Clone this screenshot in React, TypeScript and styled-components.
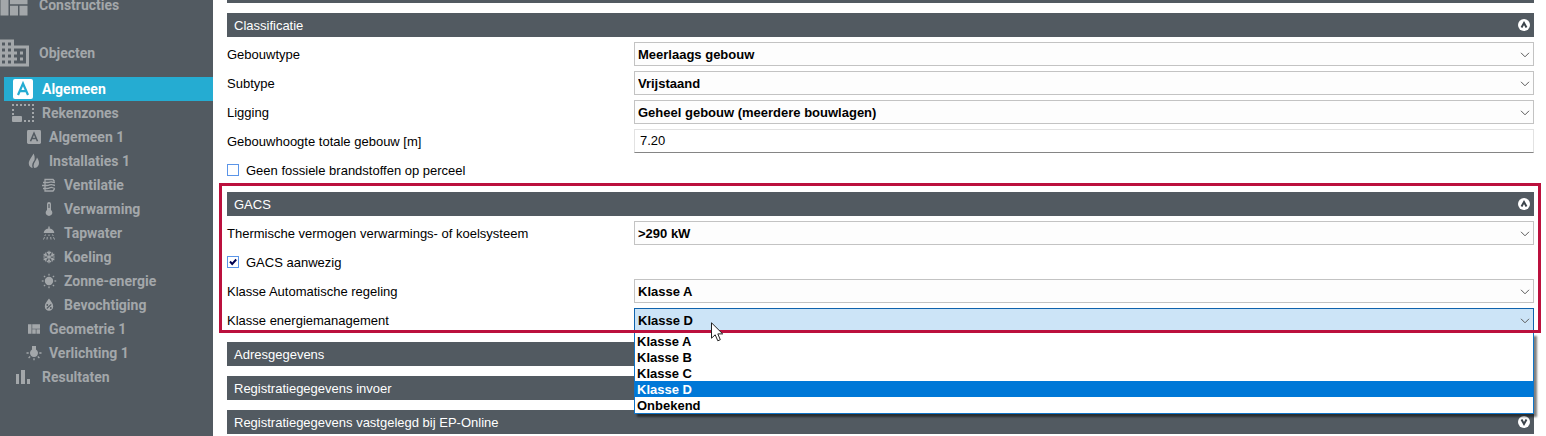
import React, { useState } from 'react';
import styled, { createGlobalStyle, css } from 'styled-components';
import { MdBusiness, MdViewQuilt } from 'react-icons/md';

const slate = '#525a61';
const muted = '#a3a7aa';
const cyan = '#25acd2';
const crimson = '#bb103d';

const GlobalStyle = createGlobalStyle`
  *, *::before, *::after { box-sizing: border-box; }
  body {
    margin: 0;
    background: #fff;
    color: #000;
    font-family: 'Liberation Sans', Arial, sans-serif;
    font-size: 13px;
    overflow: hidden;
  }
`;

const Page = styled.div`
  display: flex;
  height: 100vh;
  overflow: hidden;
`;

/* ---------- sidebar ---------- */

const Sidebar = styled.nav`
  flex: 0 0 213px;
  overflow: hidden;
  background: ${slate};
  font-family: Roboto, 'Liberation Sans', sans-serif;
  font-size: 14px;
  font-weight: bold;
  line-height: 16px;
`;

const NavList = styled.ul`
  list-style: none;
  margin: 0;
  padding: 0;
`;

const MainNav = styled(NavList)`
  margin: -19px 0 0 -4px;
`;

const TreeNav = styled(NavList)`
  margin-left: 4px;
`;

const MainLink = styled.a`
  display: flex;
  align-items: center;
  gap: 7px;
  height: 48px;
  color: ${muted};
  text-decoration: none;
`;

const TreeLink = styled.a<{ $level: number; $active?: boolean }>`
  display: flex;
  align-items: center;
  gap: 7px;
  height: 24px;
  padding-left: ${p => [7, 22, 37][p.$level]}px;
  color: ${p => (p.$active ? '#fff' : muted)};
  background: ${p => (p.$active ? cyan : 'transparent')};
  text-decoration: none;
`;

const IconSlot = styled.span<{ $wide: boolean }>`
  display: flex;
  align-items: center;
  justify-content: center;
  width: ${p => (p.$wide ? 24 : 16)}px;
  height: 24px;
`;

const LetterIcon = ({ size, ink }: { size: number; ink: string }) => (
  <svg width={size} height={size} viewBox="0 0 20 20">
    <rect width="20" height="20" rx="2" fill="currentColor" />
    <path d="M5 16 L10 4.500 L15 16 M6.800 12.200 H13.200" fill="none" stroke={ink} strokeWidth="2.200" />
  </svg>
);

const ZonesIcon = () => (
  <svg width="24" height="24" viewBox="0 0 24 24" fill="none" stroke="currentColor" strokeWidth="2">
    <path d="M1 4 H23 M2 8 V14 M22 7 V21 M13 20 H21" strokeDasharray="2 2" />
    <rect x="1" y="15" width="10" height="6" rx="1" fill="currentColor" stroke="none" />
  </svg>
);

const FlameIcon = () => (
  <svg width="16" height="16" viewBox="0 0 16 16" fill="currentColor">
    <path d="M7.500 0.500 C6 4 2.800 7 2.800 10.500 C2.800 13 4.500 14.800 6.600 15 C5.600 12 6.500 9.500 8.500 7 C9 4.500 8.500 2.200 7.500 0.500 Z" />
    <path d="M11 4.500 C10.500 7.500 7.600 9.500 7.600 12.500 C7.600 14 8 15 8.600 15 C11.500 14.700 13 12.600 13 10 C13 8 12 6 11 4.500 Z" />
  </svg>
);

const VentilationIcon = () => (
  <svg width="16" height="16" viewBox="0 0 16 16" fill="none" stroke="currentColor" strokeWidth="1.300">
    <path d="M13.500 4.500 L12 2.500 H4 V14 H12 L13.500 12" />
    <path d="M2 5.500 H7 C9 5.500 9 4.500 11 5 L14 5.500 M1 8.500 H6 C8.500 8.500 9 7 11 7.700 L14 8.500 M2 11.500 H6 C8.500 11.500 9 10 11 10.500 L14 11.500" />
  </svg>
);

const ThermometerIcon = () => (
  <svg width="16" height="16" viewBox="0 0 16 16">
    <path d="M6 3 a2 2 0 0 1 4 0 V9 a3.300 3.300 0 1 1 -4 0 Z" fill="currentColor" />
    <path d="M8 3 V7" stroke={slate} strokeWidth="1.200" />
  </svg>
);

const ShowerIcon = () => (
  <svg width="16" height="16" viewBox="0 0 16 16" fill="currentColor">
    <path d="M7.300 1.500 h1.400 v2 C11.500 3.800 13 5.500 13.300 8 H2.700 C3 5.500 4.500 3.800 7.300 3.500 Z" />
    <path
      d="M4.500 9.500 L3.800 11 M8 9.500 V11 M11.500 9.500 L12.200 11 M3.500 12.200 L2.500 14.500 M6.300 12 L6 14.500 M9.700 12 L10 14.500 M12.500 12.200 L13.500 14.500"
      stroke="currentColor"
    />
  </svg>
);

const SnowflakeIcon = () => (
  <svg width="16" height="16" viewBox="0 0 16 16" fill="none" stroke="currentColor" strokeWidth="1.200">
    {[0, 60, 120, 180, 240, 300].map(a => (
      <path key={a} transform={`rotate(${a} 8 8)`} d="M8 8 V1.800 M5.900 2.800 L8 4.900 L10.100 2.800" />
    ))}
  </svg>
);

const SunIcon = () => (
  <svg width="16" height="16" viewBox="0 0 16 16" fill="currentColor">
    <circle cx="8" cy="8" r="4.200" />
    {[0, 45, 90, 135, 180, 225, 270, 315].map(a => (
      <rect key={a} x="7.400" y="0.800" width="1.200" height="1.800" transform={`rotate(${a} 8 8)`} />
    ))}
  </svg>
);

const HumidityIcon = () => (
  <svg width="16" height="16" viewBox="0 0 16 16">
    <path d="M8 1.500 C10 4.200 12.200 6.500 12.200 9.500 A4.200 4.300 0 0 1 3.800 9.500 C3.800 6.500 6 4.200 8 1.500 Z" fill="currentColor" />
    <path d="M5.800 11.500 L10.200 7.300" stroke={slate} strokeWidth="1.100" />
    <circle cx="6.300" cy="8" r="0.900" fill={slate} />
    <circle cx="9.800" cy="11" r="0.900" fill={slate} />
  </svg>
);

const BulbIcon = () => (
  <svg width="16" height="16" viewBox="0 0 16 16">
    <path d="M6 1 H10 V4.600 A4 4 0 1 1 6 4.600 Z" fill="currentColor" />
    <path
      d="M0.500 8 H2.700 M13.300 8 H15.500 M8 13.300 V15.300 M2.600 13 L4.200 11.500 M13.400 13 L11.800 11.500"
      stroke="currentColor"
      strokeWidth="1.300"
    />
  </svg>
);

const BarsIcon = () => (
  <svg width="24" height="24" viewBox="0 0 24 24" fill="currentColor">
    <path d="M5 9h3v10H5zM10 5h4v14h-4zM16 14h3v5h-3z" />
  </svg>
);

const tree = [
  { label: 'Algemeen', level: 0, active: true, icon: <LetterIcon size={20} ink={cyan} /> },
  { label: 'Rekenzones', level: 0, icon: <ZonesIcon /> },
  { label: 'Algemeen 1', level: 1, icon: <LetterIcon size={14} ink={slate} /> },
  { label: 'Installaties 1', level: 1, icon: <FlameIcon /> },
  { label: 'Ventilatie', level: 2, icon: <VentilationIcon /> },
  { label: 'Verwarming', level: 2, icon: <ThermometerIcon /> },
  { label: 'Tapwater', level: 2, icon: <ShowerIcon /> },
  { label: 'Koeling', level: 2, icon: <SnowflakeIcon /> },
  { label: 'Zonne-energie', level: 2, icon: <SunIcon /> },
  { label: 'Bevochtiging', level: 2, icon: <HumidityIcon /> },
  { label: 'Geometrie 1', level: 1, icon: <MdViewQuilt size={16} /> },
  { label: 'Verlichting 1', level: 1, icon: <BulbIcon /> },
  { label: 'Resultaten', level: 0, icon: <BarsIcon /> },
];

/* ---------- form ---------- */

const Content = styled.main`
  flex: 1;
  display: flex;
  flex-direction: column;
  gap: 8px;
  min-width: 0;
  padding: 0 12px 0 14px;
`;

const ScrolledBar = styled.div`
  flex: none;
  height: 3px;
  margin-bottom: 2px;
  background: ${slate};
`;

const SectionBox = styled.section`
  flex: none;
  position: relative;
`;

const SectionBar = styled.header`
  display: flex;
  align-items: center;
  justify-content: space-between;
  height: 24px;
  margin-bottom: 2px;
  padding: 0 4px 0 7px;
  background: ${slate};
  color: #fff;
`;

const SectionTitle = styled.h2`
  margin: 0;
  padding-top: 2px;
  font-size: 13px;
  font-weight: normal;
  line-height: 22px;
`;

const Toggle = styled.button`
  display: flex;
  width: 12px;
  height: 12px;
  padding: 0;
  border: 0;
  border-radius: 50%;
  background: #fff;
  color: #3c444b;
`;

const Row = styled.div`
  display: grid;
  grid-template-columns: 407px minmax(0, 1fr);
  align-items: center;
  height: 29px;
`;

const Label = styled.label`
  padding-top: 2px;
`;

const CheckRow = styled.div`
  display: flex;
  align-items: center;
  gap: 7px;
  height: 29px;
`;

const Checkbox = styled.input`
  appearance: none;
  width: 12px;
  height: 12px;
  margin: 0;
  border: 1px solid #5b95e8;
  background: #fff;
  &:checked {
    background: #fff
      url("data:image/svg+xml,%3Csvg xmlns='http://www.w3.org/2000/svg' viewBox='0 0 10 10'%3E%3Cpath d='M2 4.500 L4.200 7 L8.200 2.500' fill='none' stroke='%23000050' stroke-width='1.900'/%3E%3C/svg%3E");
  }
`;

const Control = styled.div`
  position: relative;
  height: 24px;
`;

const fieldBase = css`
  display: block;
  width: 100%;
  height: 24px;
  margin: 0;
  border: 1px solid #c3c3c3;
  border-radius: 0;
  outline: 0;
  color: #000;
  font-family: inherit;
`;

const Select = styled.select<{ $open?: boolean }>`
  ${fieldBase}
  appearance: none;
  padding: 2px 24px 0 3px;
  background: ${p => (p.$open ? '#cce4f7' : '#fdfdfd')};
  border-color: ${p => (p.$open ? '#0f63ad' : '#c3c3c3')};
  font-size: 13px;
  font-weight: bold;
`;

const TextInput = styled.input`
  ${fieldBase}
  padding: 0 5px;
  border-color: #e2e2e2;
  border-bottom-color: #858585;
  background: #fff;
  font-size: 13px;
`;

const Chevron = styled.svg`
  position: absolute;
  right: 4px;
  top: 10px;
  pointer-events: none;
`;

const Options = styled.ul`
  position: absolute;
  z-index: 2;
  top: 25px;
  left: 0;
  right: 0;
  margin: 0;
  padding: 0;
  list-style: none;
  border: solid #0f74c8;
  border-width: 0 1px 1px;
  background: #fff;
  box-shadow: 3px 3px 2px rgba(0, 0, 0, 0.5);
  font-weight: bold;
`;

const Option = styled.li<{ $selected: boolean }>`
  height: 16px;
  padding-left: 2px;
  line-height: 18px;
  background: ${p => (p.$selected ? '#0078d7' : 'transparent')};
  color: ${p => (p.$selected ? '#fff' : '#000')};
`;

const Highlight = styled.div`
  position: absolute;
  z-index: 1;
  top: -9px;
  right: -7px;
  bottom: 1px;
  left: -8px;
  border: 3px solid ${crimson};
  pointer-events: none;
`;

const Pointer = styled.svg`
  position: absolute;
  z-index: 3;
  top: 14px;
  left: 77px;
  pointer-events: none;
`;

function Section({ title, open, children }: { title: string; open?: boolean; children?: React.ReactNode }) {
  return (
    <SectionBox>
      <SectionBar>
        <SectionTitle>{title}</SectionTitle>
        <Toggle type="button" aria-label={title} aria-expanded={!!open}>
          <svg width="12" height="12" viewBox="0 0 12 12" fill="none" stroke="currentColor" strokeWidth="2">
            <path d={open ? 'M3.500 8.500 L6 4 L8.500 8.500' : 'M3.500 3.500 L6 8 L8.500 3.500'} />
          </svg>
        </Toggle>
      </SectionBar>
      {children}
    </SectionBox>
  );
}

function SelectRow(props: { id: string; label: string; value: string; open?: boolean; children?: React.ReactNode; options?: string[] }) {
  const { id, label, value, open, children, options = [value] } = props;
  const [current, setCurrent] = useState(value);
  return (
    <Row>
      <Label htmlFor={id}>{label}</Label>
      <Control>
        <Select id={id} $open={open} value={current} onChange={e => setCurrent(e.target.value)}>
          {options.map(o => (
            <option key={o}>{o}</option>
          ))}
        </Select>
        <Chevron width="10" height="6" viewBox="0 0 10 6" fill="none" stroke="#5a5a5a">
          <path d="M1 0.800 L5 4.800 L9 0.800" />
        </Chevron>
        {children}
      </Control>
    </Row>
  );
}

function CheckField({ id, label, checked }: { id: string; label: string; checked?: boolean }) {
  return (
    <CheckRow>
      <Checkbox id={id} type="checkbox" defaultChecked={checked} />
      <Label htmlFor={id}>{label}</Label>
    </CheckRow>
  );
}

const classes = ['Klasse A', 'Klasse B', 'Klasse C', 'Klasse D', 'Onbekend'];

export default function App() {
  return (
    <Page>
      <GlobalStyle />
      <Sidebar>
        <MainNav>
          <li>
            <MainLink href="#constructies">
              <MdViewQuilt size={36} />
              Constructies
            </MainLink>
          </li>
          <li>
            <MainLink href="#objecten">
              <MdBusiness size={36} />
              Objecten
            </MainLink>
          </li>
        </MainNav>
        <TreeNav>
          {tree.map(item => (
            <li key={item.label}>
              <TreeLink href="#" $level={item.level} $active={item.active}>
                <IconSlot $wide={item.level === 0}>{item.icon}</IconSlot>
                {item.label}
              </TreeLink>
            </li>
          ))}
        </TreeNav>
      </Sidebar>
      <Content>
        <ScrolledBar />
        <Section title="Classificatie" open>
          <SelectRow id="gebouwtype" label="Gebouwtype" value="Meerlaags gebouw" />
          <SelectRow id="subtype" label="Subtype" value="Vrijstaand" />
          <SelectRow id="ligging" label="Ligging" value="Geheel gebouw (meerdere bouwlagen)" />
          <Row>
            <Label htmlFor="hoogte">Gebouwhoogte totale gebouw [m]</Label>
            <TextInput id="hoogte" defaultValue="7.20" />
          </Row>
          <CheckField id="fossiel" label="Geen fossiele brandstoffen op perceel" />
        </Section>
        <Section title="GACS" open>
          <SelectRow id="vermogen" label="Thermische vermogen verwarmings- of koelsysteem" value=">290 kW" />
          <CheckField id="gacs" label="GACS aanwezig" checked />
          <SelectRow id="regeling" label="Klasse Automatische regeling" value="Klasse A" options={classes} />
          <SelectRow id="management" label="Klasse energiemanagement" value="Klasse D" options={classes} open>
            <Options role="listbox" aria-label="Klasse energiemanagement">
              {classes.map(c => (
                <Option key={c} role="option" aria-selected={c === 'Klasse D'} $selected={c === 'Klasse D'}>
                  {c}
                </Option>
              ))}
            </Options>
            <Pointer width="13" height="20" viewBox="0 0 13 20">
              <path
                d="M0.500 0.800 V16.200 L4.200 12.800 L6.800 18.800 L9.300 17.700 L6.800 11.900 H11.700 Z"
                fill="#fff"
                stroke="#222"
              />
            </Pointer>
          </SelectRow>
          <Highlight />
        </Section>
        <Section title="Adresgegevens" />
        <Section title="Registratiegegevens invoer" />
        <Section title="Registratiegegevens vastgelegd bij EP-Online" />
      </Content>
    </Page>
  );
}
